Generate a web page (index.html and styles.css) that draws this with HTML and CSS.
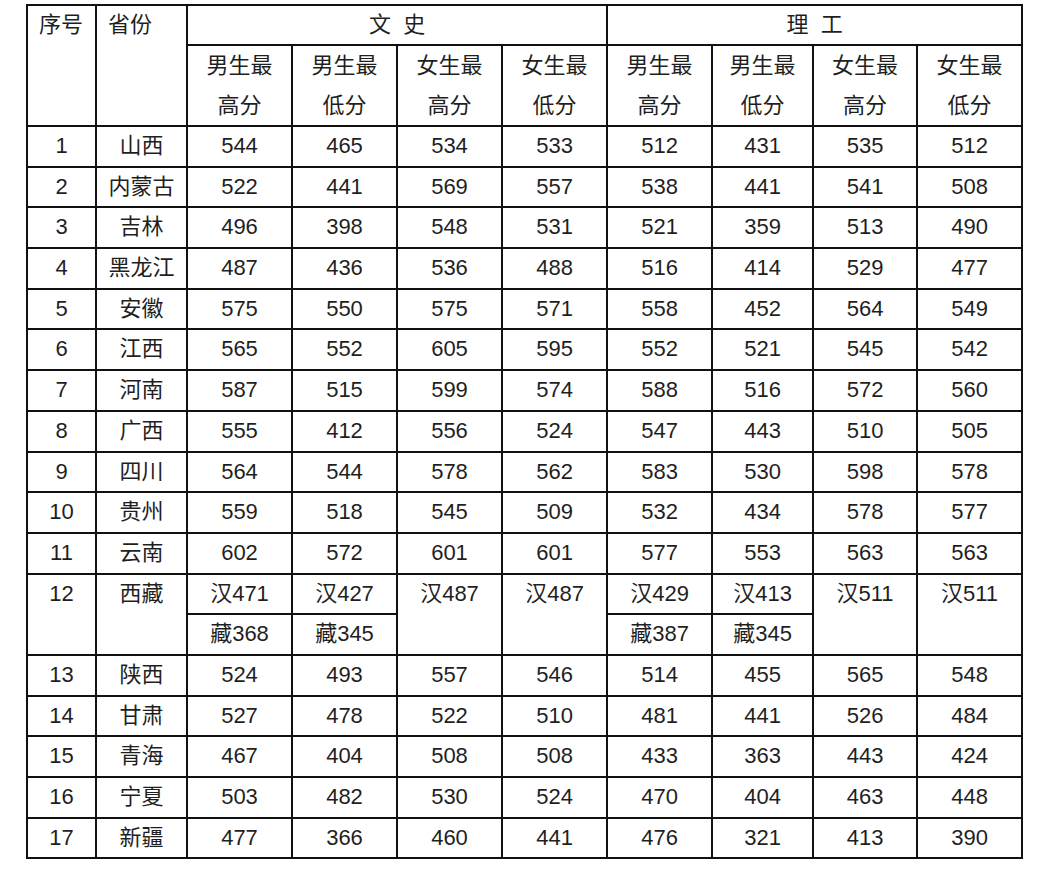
FILE: index.html
```html
<!DOCTYPE html>
<html lang="zh-CN">
<head>
<meta charset="utf-8">
<title>分数线</title>
<link rel="stylesheet" href="styles.css">
</head>
<body>
<table class="scores">
  <colgroup>
    <col class="c-seq"><col class="c-prov">
    <col class="c-num"><col class="c-num"><col class="c-num"><col class="c-num">
    <col class="c-num"><col class="c-num2"><col class="c-num3"><col class="c-num">
  </colgroup>
  <thead>
    <tr class="h1">
      <th rowspan="2" class="corner">序号</th>
      <th rowspan="2" class="corner">省份</th>
      <th colspan="4" class="group">文&nbsp;&nbsp;史</th>
      <th colspan="4" class="group">理&nbsp;&nbsp;工</th>
    </tr>
    <tr class="h2">
      <th>男生最<br>高分</th><th>男生最<br>低分</th><th>女生最<br>高分</th><th>女生最<br>低分</th>
      <th>男生最<br>高分</th><th>男生最<br>低分</th><th>女生最<br>高分</th><th>女生最<br>低分</th>
    </tr>
  </thead>
  <tbody>
    <tr><td>1</td><td>山西</td><td>544</td><td>465</td><td>534</td><td>533</td><td>512</td><td>431</td><td>535</td><td>512</td></tr>
    <tr><td>2</td><td>内蒙古</td><td>522</td><td>441</td><td>569</td><td>557</td><td>538</td><td>441</td><td>541</td><td>508</td></tr>
    <tr><td>3</td><td>吉林</td><td>496</td><td>398</td><td>548</td><td>531</td><td>521</td><td>359</td><td>513</td><td>490</td></tr>
    <tr><td>4</td><td>黑龙江</td><td>487</td><td>436</td><td>536</td><td>488</td><td>516</td><td>414</td><td>529</td><td>477</td></tr>
    <tr><td>5</td><td>安徽</td><td>575</td><td>550</td><td>575</td><td>571</td><td>558</td><td>452</td><td>564</td><td>549</td></tr>
    <tr><td>6</td><td>江西</td><td>565</td><td>552</td><td>605</td><td>595</td><td>552</td><td>521</td><td>545</td><td>542</td></tr>
    <tr><td>7</td><td>河南</td><td>587</td><td>515</td><td>599</td><td>574</td><td>588</td><td>516</td><td>572</td><td>560</td></tr>
    <tr><td>8</td><td>广西</td><td>555</td><td>412</td><td>556</td><td>524</td><td>547</td><td>443</td><td>510</td><td>505</td></tr>
    <tr><td>9</td><td>四川</td><td>564</td><td>544</td><td>578</td><td>562</td><td>583</td><td>530</td><td>598</td><td>578</td></tr>
    <tr><td>10</td><td>贵州</td><td>559</td><td>518</td><td>545</td><td>509</td><td>532</td><td>434</td><td>578</td><td>577</td></tr>
    <tr><td>11</td><td>云南</td><td>602</td><td>572</td><td>601</td><td>601</td><td>577</td><td>553</td><td>563</td><td>563</td></tr>
    <tr>
      <td rowspan="2" class="top">12</td><td rowspan="2" class="top">西藏</td>
      <td>汉471</td><td>汉427</td><td rowspan="2" class="top">汉487</td><td rowspan="2" class="top">汉487</td>
      <td>汉429</td><td>汉413</td><td rowspan="2" class="top">汉511</td><td rowspan="2" class="top">汉511</td>
    </tr>
    <tr><td>藏368</td><td>藏345</td><td>藏387</td><td>藏345</td></tr>
    <tr><td>13</td><td>陕西</td><td>524</td><td>493</td><td>557</td><td>546</td><td>514</td><td>455</td><td>565</td><td>548</td></tr>
    <tr><td>14</td><td>甘肃</td><td>527</td><td>478</td><td>522</td><td>510</td><td>481</td><td>441</td><td>526</td><td>484</td></tr>
    <tr><td>15</td><td>青海</td><td>467</td><td>404</td><td>508</td><td>508</td><td>433</td><td>363</td><td>443</td><td>424</td></tr>
    <tr><td>16</td><td>宁夏</td><td>503</td><td>482</td><td>530</td><td>524</td><td>470</td><td>404</td><td>463</td><td>448</td></tr>
    <tr><td>17</td><td>新疆</td><td>477</td><td>366</td><td>460</td><td>441</td><td>476</td><td>321</td><td>413</td><td>390</td></tr>
  </tbody>
</table>
</body>
</html>
```
FILE: styles.css
```css
html, body {
  margin: 0;
  padding: 0;
  background: #ffffff;
}
body {
  padding: 4px 0 0 26px;
  font-family: "Liberation Sans", "Noto Sans CJK SC", sans-serif;
  color: #1f1f1f;
}
.scores {
  border-collapse: collapse;
  table-layout: fixed;
  width: 997px;
  font-size: 22px;
}
.c-seq { width: 69px; }
.c-prov { width: 91px; }
.c-num { width: 105px; }
.c-num2 { width: 101px; }
.c-num3 { width: 104px; }
.scores th,
.scores td {
  border: 2px solid #111;
  padding: 0;
  text-align: center;
  font-weight: normal;
  line-height: 38.6px;
  vertical-align: middle;
  white-space: nowrap;
}
.scores tr.h1 { height: 40px; }
.scores tr.h1 th { line-height: 38px; }
.scores tr.h2 { height: 81px; }
.scores tr.h2 th { line-height: 39.5px; }
.scores tbody tr { height: 40.7px; }
.scores th.corner {
  text-align: left;
  vertical-align: top;
  padding-left: 11px;
}
.scores td.top {
  vertical-align: top;
}
```
